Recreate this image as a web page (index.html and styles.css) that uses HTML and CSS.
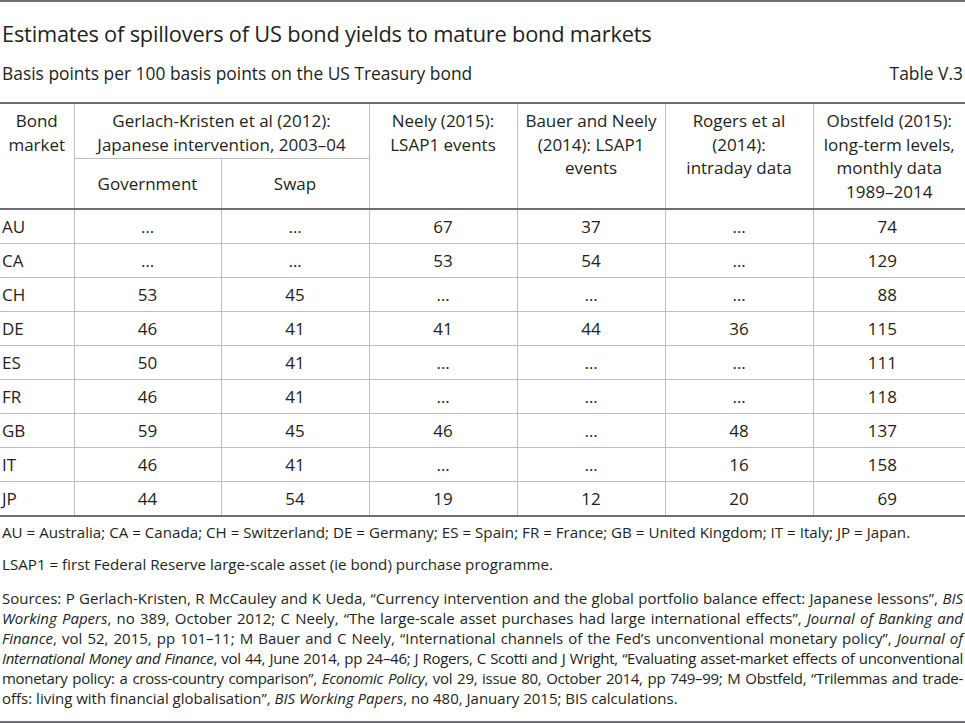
FILE: index.html
```html
<!DOCTYPE html>
<html lang="en">
<head>
<meta charset="utf-8">
<title>Estimates of spillovers of US bond yields to mature bond markets</title>
<link rel="stylesheet" href="styles.css">
</head>
<body>
<div class="page">
  <header class="head">
    <h1 class="title">Estimates of spillovers of US bond yields to mature bond markets</h1>
    <div class="subrow">
      <span class="subtitle">Basis points per 100 basis points on the US Treasury bond</span>
      <span class="tabno">Table V.3</span>
    </div>
  </header>

  <table class="data">
    <colgroup>
      <col class="c-mkt">
      <col class="c-gov">
      <col class="c-swap">
      <col class="c-neely">
      <col class="c-bauer">
      <col class="c-rogers">
      <col class="c-obst">
    </colgroup>
    <thead>
      <tr class="h1">
        <th rowspan="2" class="mkt">Bond<br>market</th>
        <th colspan="2" class="grp">Gerlach-Kristen et al (2012):<br>Japanese intervention, 2003–04</th>
        <th rowspan="2">Neely (2015):<br>LSAP1 events</th>
        <th rowspan="2">Bauer and Neely<br>(2014): LSAP1<br>events</th>
        <th rowspan="2">Rogers et al<br>(2014):<br>intraday data</th>
        <th rowspan="2">Obstfeld (2015):<br>long-term levels,<br>monthly data<br>1989–2014</th>
      </tr>
      <tr class="h2">
        <th class="sub">Government</th>
        <th class="sub">Swap</th>
      </tr>
    </thead>
    <tbody>
      <tr><td class="mkt">AU</td><td>…</td><td>…</td><td>67</td><td>37</td><td>…</td><td class="obst">74</td></tr>
      <tr><td class="mkt">CA</td><td>…</td><td>…</td><td>53</td><td>54</td><td>…</td><td class="obst">129</td></tr>
      <tr><td class="mkt">CH</td><td>53</td><td>45</td><td>…</td><td>…</td><td>…</td><td class="obst">88</td></tr>
      <tr><td class="mkt">DE</td><td>46</td><td>41</td><td>41</td><td>44</td><td>36</td><td class="obst">115</td></tr>
      <tr><td class="mkt">ES</td><td>50</td><td>41</td><td>…</td><td>…</td><td>…</td><td class="obst">111</td></tr>
      <tr><td class="mkt">FR</td><td>46</td><td>41</td><td>…</td><td>…</td><td>…</td><td class="obst">118</td></tr>
      <tr><td class="mkt">GB</td><td>59</td><td>45</td><td>46</td><td>…</td><td>48</td><td class="obst">137</td></tr>
      <tr><td class="mkt">IT</td><td>46</td><td>41</td><td>…</td><td>…</td><td>16</td><td class="obst">158</td></tr>
      <tr><td class="mkt">JP</td><td>44</td><td>54</td><td>19</td><td>12</td><td>20</td><td class="obst">69</td></tr>
    </tbody>
  </table>

  <footer class="notes">
    <p class="note">AU = Australia; CA = Canada; CH = Switzerland; DE = Germany; ES = Spain; FR = France; GB = United Kingdom; IT = Italy; JP = Japan.</p>
    <p class="note note2">LSAP1 = first Federal Reserve large-scale asset (ie bond) purchase programme.</p>
    <p class="sources">
      <span class="ln">Sources: P Gerlach-Kristen, R McCauley and K Ueda, “Currency intervention and the global portfolio balance effect: Japanese lessons”, <i>BIS</i></span>
      <span class="ln"><i>Working Papers</i>, no 389, October 2012; C Neely, “The large-scale asset purchases had large international effects”, <i>Journal of Banking and</i></span>
      <span class="ln"><i>Finance</i>, vol 52, 2015, pp 101–11; M Bauer and C Neely, “International channels of the Fed’s unconventional monetary policy”, <i>Journal of</i></span>
      <span class="ln tight"><i>International Money and Finance</i>, vol 44, June 2014, pp 24–46; J Rogers, C Scotti and J Wright, “Evaluating asset-market effects of unconventional</span>
      <span class="ln tight">monetary policy: a cross-country comparison”, <i>Economic Policy</i>, vol 29, issue 80, October 2014, pp 749–99; M Obstfeld, “Trilemmas and trade-</span>
      <span class="ln last">offs: living with financial globalisation”, <i>BIS Working Papers</i>, no 480, January 2015; BIS calculations.</span>
    </p>
  </footer>
</div>
</body>
</html>
```

FILE: styles.css
```css
html, body {
  margin: 0;
  padding: 0;
  background: #ffffff;
}

body {
  font-family: "Open Sans", "Noto Sans", "Liberation Sans", sans-serif;
  color: #231f20;
}

.page {
  width: 965px;
  height: 723px;
  box-sizing: border-box;
  border-top: 2px solid #6d6e71;
  border-bottom: 2px solid #6d6e71;
  display: flex;
  flex-direction: column;
}

.head {
  padding: 0 2px 0 2px;
}

.title {
  margin: 18px 0 0 0;
  font-size: 21.8px;
  font-weight: 400;
  line-height: 28px;
  letter-spacing: -0.2px;
}

.subrow {
  display: flex;
  justify-content: space-between;
  align-items: baseline;
  margin-top: 14px;
  font-size: 17.4px;
  line-height: 22px;
}

.data {
  margin-top: 18px;
  width: 965px;
  border-collapse: collapse;
  table-layout: fixed;
  font-size: 17px;
  border-top: 2px solid #6d6e71;
  border-bottom: 2px solid #6d6e71;
}

.c-mkt { width: 74px; }
.c-gov { width: 147px; }
.c-swap { width: 148px; }
.c-neely { width: 148px; }
.c-bauer { width: 148px; }
.c-rogers { width: 148px; }
.c-obst { width: 152px; }

.data th {
  font-weight: 400;
  text-align: center;
  vertical-align: top;
  line-height: 23.5px;
  padding: 5px 0 0 0;
  border-left: 1px solid #bcbec0;
}

.data th.mkt {
  border-left: none;
}

.data tr.h1 {
  height: 55px;
}

.data tr.h2 {
  height: 51px;
}

.data th.grp {
  border-bottom: 1px solid #bcbec0;
}

.data th.sub {
  vertical-align: middle;
  padding: 0;
}

.data thead {
  border-bottom: 2px solid #6d6e71;
}

.data td {
  height: 33px;
  padding: 0;
  text-align: center;
  vertical-align: middle;
  border-left: 1px solid #bcbec0;
  border-top: 1px solid #bcbec0;
  line-height: 20px;
}

.data tbody tr:first-child td {
  border-top: none;
}

.data td.mkt {
  text-align: left;
  padding-left: 2px;
  border-left: none;
}

.data td.obst {
  text-align: right;
  padding-right: 68px;
}

.notes {
  padding: 5px 2px 0 2px;
  font-size: 15.15px;
  line-height: 20px;
}

.note {
  margin: 0 0 12px 0;
}

.note2 {
  margin-bottom: 14px;
}

.sources {
  margin: 0;
  font-size: 15px;
}

.ln {
  display: block;
  text-align: justify;
  text-align-last: justify;
}

.ln.tight {
  letter-spacing: -0.3px;
  word-spacing: -1.5px;
}

.ln.last {
  text-align-last: left;
}
```
